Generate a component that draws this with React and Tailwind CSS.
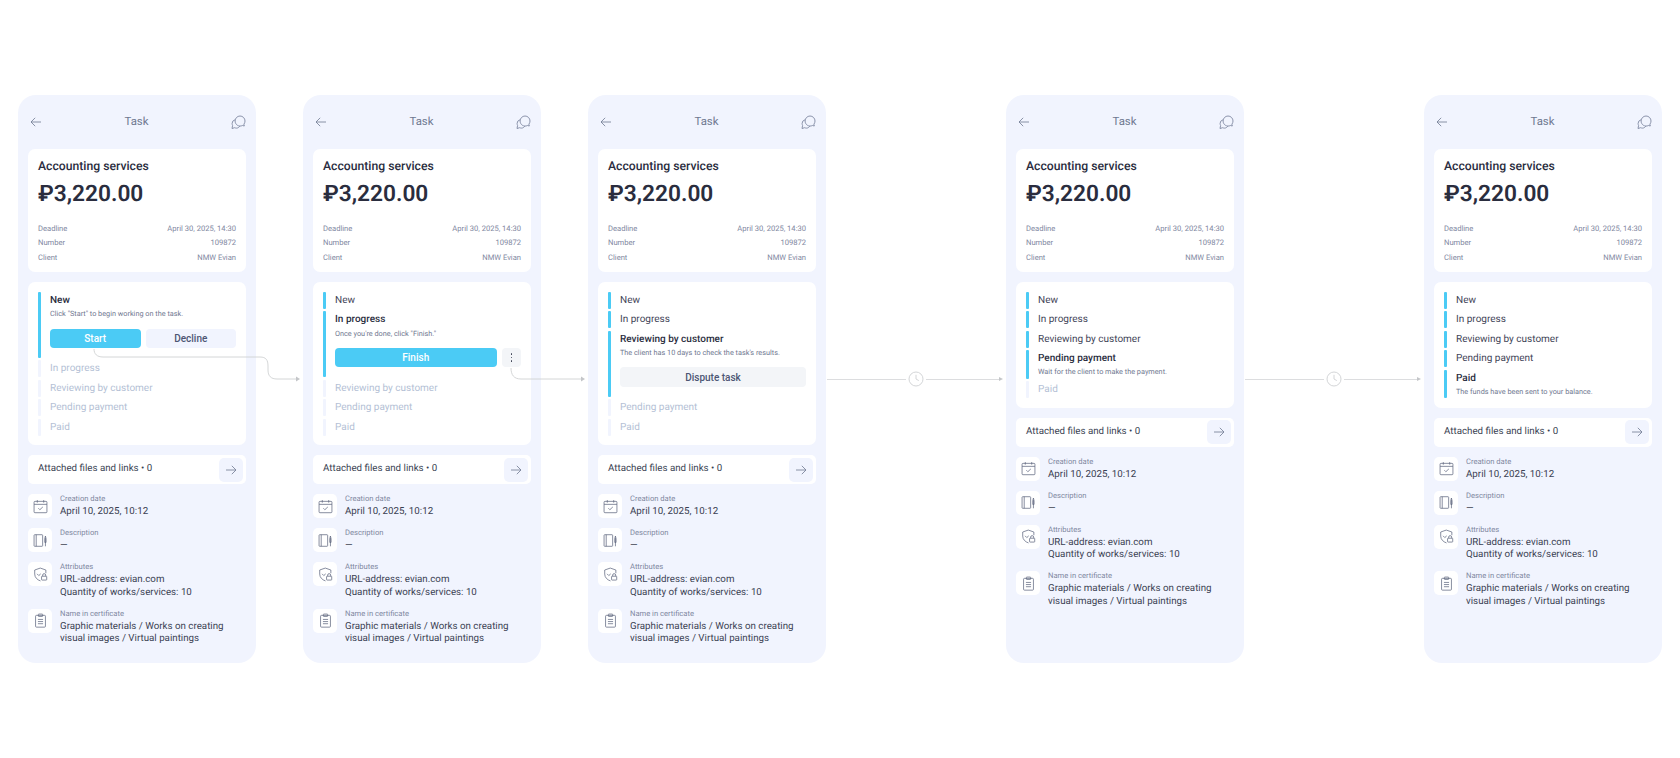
import React from 'react';

const STATUSES = ['New', 'In progress', 'Reviewing by customer', 'Pending payment', 'Paid'];

const HINTS = {
  0: 'Click "Start" to begin working on the task.',
  1: 'Once you\'re done, click "Finish."',
  2: "The client has 10 days to check the task's results.",
  3: 'Wait for the client to make the payment.',
  4: 'The funds have been sent to your balance.',
};

const BackIcon = () => (
  <svg width="12" height="12" viewBox="0 0 12 12" fill="none" stroke="#6f7890" strokeWidth="0.8">
    <path d="M11 6H1.2M5.2 1.8 1 6l4.2 4.2" />
  </svg>
);

const ChatIcon = () => (
  <svg width="15" height="15" viewBox="0 0 15 15" fill="none" stroke="#7f88a1" strokeWidth="0.9">
    <path d="M9 1a5 5 0 0 1 5 5c0 1.200-.4 2.300-1.100 3.200l.4 1.800-1.900-.5A5 5 0 0 1 4.100 6 5 5 0 0 1 9 1Z" />
    <path d="M4 4.800a3.800 3.800 0 0 0-2.900 3.700c0 .7.2 1.400.5 2l-.6 3 2.700-.8c.6.300 1.200.4 1.800.4 1.400 0 2.700-.8 3.300-2" />
  </svg>
);

const NextIcon = () => (
  <svg width="12" height="12" viewBox="0 0 12 12" fill="none" stroke="#6f7890" strokeWidth="0.8">
    <path d="M1 6h9.800M6.800 1.800 11 6l-4.200 4.200" />
  </svg>
);

const CalendarIcon = () => (
  <svg width="15" height="15" viewBox="0 0 14 14" fill="none" stroke="#5f6880" strokeWidth="0.7">
    <rect x="1" y="2.200" width="12" height="10.600" rx="0.800" />
    <path d="M1 5h12M4 1v2.400M10 1v2.400M5 8.600l1.400 1.400 2.800-2.600" />
  </svg>
);

const BookIcon = () => (
  <svg width="15" height="15" viewBox="0 0 14 14" fill="none" stroke="#5f6880" strokeWidth="0.7">
    <rect x="1" y="1.600" width="8" height="10.800" rx="0.600" />
    <path d="M3 1.600v10.800M11.600 4.600v7.800M11 5.400l.6-2.600.6 2.600v3.400h-1.200z" />
  </svg>
);

const ShieldIcon = () => (
  <svg width="15" height="15" viewBox="0 0 14 14" fill="none" stroke="#5f6880" strokeWidth="0.7">
    <path d="M6.800 1 12 2.800v3M7 13c-3-1-5.400-3.200-5.400-6.400V2.800L6.800 1M3.800 6.400l1.600 1.600 1.800-1.600" />
    <rect x="8" y="8.600" width="4.800" height="3.600" rx="0.500" />
    <path d="M9 8.600V7.600a1.400 1.400 0 0 1 2.800 0v1" />
  </svg>
);

const ClipboardIcon = () => (
  <svg width="15" height="15" viewBox="0 0 14 14" fill="none" stroke="#5f6880" strokeWidth="0.7">
    <rect x="2.400" y="2.200" width="9.200" height="11" rx="0.800" />
    <rect x="5" y="1" width="4" height="2.200" rx="0.400" />
    <path d="M4.600 6h4.800M4.600 8h4.800M4.600 10h4.800" />
  </svg>
);

const ClockIcon = () => (
  <svg width="16" height="16" viewBox="0 0 16 16" fill="none" stroke="#d4d6d8" strokeWidth="1" className="shrink-0">
    <circle cx="8" cy="8" r="7" />
    <path d="M8 3.800V8l2.800 1.600" />
  </svg>
);

const DetailRow = ({ label, value }) => (
  <div className="flex justify-between h-[14.6px] items-center text-[7.6px] text-[#7f88a1]">
    <span>{label}</span>
    <span>{value}</span>
  </div>
);

const InfoRow = ({ icon, label, children }) => (
  <div className="flex gap-2">
    <div className="w-6 h-6 shrink-0 rounded-[5px] bg-white flex items-center justify-center">{icon}</div>
    <div className="min-w-0">
      <div className="text-[7.6px] leading-[10px] text-[#7f88a1]">{label}</div>
      <div className="text-[9.75px] leading-[12.4px] mt-[2px] text-[#3a3f52]">{children}</div>
    </div>
  </div>
);

const StatusActions = ({ step }) => {
  if (step === 0) {
    return (
      <div className="flex gap-[5px] mt-[8px] pb-[10px] text-[10px] font-medium">
        <button className="flex-1 h-[19.5px] rounded-[4px] bg-[#4bcbf5] text-white">Start</button>
        <button className="flex-1 h-[19.5px] rounded-[4px] bg-[#f1f4fe] text-[#4d5674]">Decline</button>
      </div>
    );
  }
  if (step === 1) {
    return (
      <div className="flex gap-[5px] mt-[8px] pb-[10px] text-[10px] font-medium">
        <button className="flex-1 h-[19.5px] rounded-[4px] bg-[#4bcbf5] text-white">Finish</button>
        <button className="w-[19.5px] h-[19.5px] rounded-[4px] bg-[#f3f5f8] flex flex-col items-center justify-center gap-[2px]">
          <span className="w-[1.5px] h-[1.5px] rounded-full bg-[#3a3f52]" />
          <span className="w-[1.5px] h-[1.5px] rounded-full bg-[#3a3f52]" />
          <span className="w-[1.5px] h-[1.5px] rounded-full bg-[#3a3f52]" />
        </button>
      </div>
    );
  }
  if (step === 2) {
    return (
      <div className="mt-[8px] pb-[10px] text-[10px] font-medium">
        <button className="w-full h-[19.5px] rounded-[4px] bg-[#f3f5f8] text-[#4d5674]">Dispute task</button>
      </div>
    );
  }
  return null;
};

const StatusRow = ({ name, index, step }) => {
  const done = index < step;
  const current = index === step;
  return (
    <div className={`flex gap-[9.5px] ${current ? '' : 'h-[17px]'}`}>
      <div className={`w-[2.5px] shrink-0 rounded-[1px] ${done || current ? 'bg-[#4bcbf5]' : 'bg-[#f1f4fe]'}`} />
      <div className="flex-1 min-w-0">
        {current ? (
          <>
            <div className="h-[17px] flex items-center text-[10px] font-medium text-[#2a2d3e]">{name}</div>
            <div className="h-[11.5px] flex items-center text-[7.3px] text-[#6f7890]">{HINTS[index]}</div>
            <StatusActions step={step} />
          </>
        ) : (
          <div className={`h-[17px] flex items-center text-[10px] ${done ? 'text-[#3f4558]' : 'text-[#b4bfd5]'}`}>{name}</div>
        )}
      </div>
    </div>
  );
};

const Phone = ({ step }) => (
  <div className="w-[238px] h-[568px] shrink-0 rounded-[18px] bg-[#f1f4fe] px-[10px]">
    <div className="h-[54px] flex items-center justify-between pl-[2px]">
      <BackIcon />
      <span className="text-[11.4px] text-[#6f7890]">Task</span>
      <ChatIcon />
    </div>

    <div className="h-[123px] rounded-[7px] bg-white px-[10px] pt-[10px]">
      <div className="h-[14px] flex items-center text-[12.2px] font-medium text-[#2a2d3e]">Accounting services</div>
      <div className="h-[26px] mt-[8px] flex items-center text-[22.7px] leading-none font-semibold text-[#2a2d3e]">₽3,220.00</div>
      <div className="mt-[14px]">
        <DetailRow label="Deadline" value="April 30, 2025, 14:30" />
        <DetailRow label="Number" value="109872" />
        <DetailRow label="Client" value="NMW Evian" />
      </div>
    </div>

    <div className="mt-[10px] rounded-[7px] bg-white pt-[10px] pb-[9.5px] px-[10px] flex flex-col gap-[2.4px]">
      {STATUSES.map((name, i) => (
        <StatusRow key={name} name={name} index={i} step={step} />
      ))}
    </div>

    <div className="mt-[10px] h-[29px] rounded-[5px] bg-white flex items-center justify-between pl-[10px] pr-[3px] text-[9.75px] text-[#3a3f52]">
      <span>Attached files and links • 0</span>
      <div className="w-6 h-6 rounded-[5px] bg-[#f1f4fe] flex items-center justify-center">
        <NextIcon />
      </div>
    </div>

    <div className="mt-[10px] flex flex-col gap-[9.7px]">
      <InfoRow icon={<CalendarIcon />} label="Creation date">April 10, 2025, 10:12</InfoRow>
      <InfoRow icon={<BookIcon />} label="Description">—</InfoRow>
      <InfoRow icon={<ShieldIcon />} label="Attributes">
        URL-address: evian.com
        <br />
        Quantity of works/services: 10
      </InfoRow>
      <InfoRow icon={<ClipboardIcon />} label="Name in certificate">
        Graphic materials / Works on creating
        <br />
        visual images / Virtual paintings
      </InfoRow>
    </div>
  </div>
);

// timer arrow between the last phones
const TimerLink = () => (
  <div className="w-[180px] h-[568px] shrink-0 flex items-center pl-px pr-[3px]">
    <div className="w-[79px] h-px bg-[#dcdddf]" />
    <div className="mx-[2px]"><ClockIcon /></div>
    <div className="flex-1 h-px bg-[#dcdddf]" />
    <div className="w-0 h-0 border-y-[2.5px] border-y-transparent border-l-[4px] border-l-[#c4c6c9]" />
  </div>
);

const App = () => {
  return (
    <div className="relative w-[1680px] h-[758px] bg-white overflow-hidden pt-[95px] pl-[18px] font-['Roboto',sans-serif] [text-rendering:geometricPrecision] antialiased">
      <div className="flex">
        <Phone step={0} />
        <div className="w-[47px] shrink-0" />
        <Phone step={1} />
        <div className="w-[47px] shrink-0" />
        <Phone step={2} />
        <TimerLink />
        <Phone step={3} />
        <TimerLink />
        <Phone step={4} />
      </div>

      {/* connectors drawn over the phones */}
      <svg className="absolute inset-0 pointer-events-none" width="1680" height="758" fill="none">
        <path d="M94 349c0 5 3 8 9 8h157c6 0 8 3 8 9v4c0 6 3 9 9 9h19" stroke="#cfd1d3" strokeWidth="0.9" />
        <path d="M296 376.500 300 379l-4 2.500z" fill="#c4c6c9" />
        <path d="M511 368c0 7 3 11 10 11h60" stroke="#cfd1d3" strokeWidth="0.9" />
        <path d="M581 376.500 585 379l-4 2.500z" fill="#c4c6c9" />
      </svg>
    </div>
  );
};

export default App;
